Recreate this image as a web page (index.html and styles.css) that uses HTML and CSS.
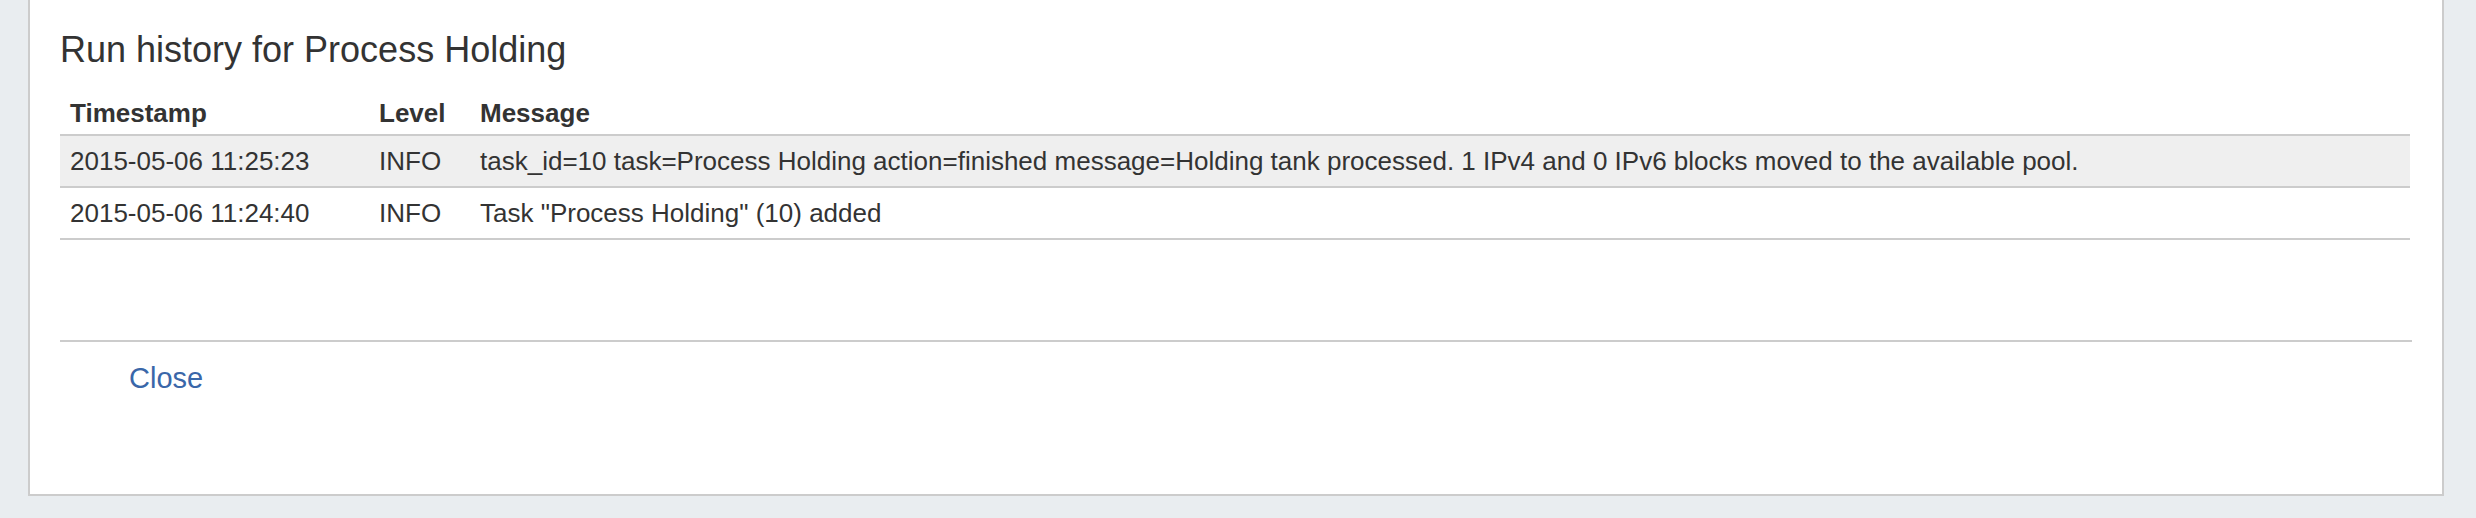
FILE: index.html
```html
<!DOCTYPE html>
<html>
<head>
<meta charset="utf-8">
<title>Run history for Process Holding</title>
<link rel="stylesheet" href="styles.css">
</head>
<body>
<div class="modal">
  <div class="modal-body">
    <h4 class="modal-title">Run history for Process Holding</h4>
    <table class="history">
      <thead>
        <tr>
          <th class="col-time">Timestamp</th>
          <th class="col-level">Level</th>
          <th class="col-msg">Message</th>
        </tr>
      </thead>
      <tbody>
        <tr class="striped">
          <td>2015-05-06 11:25:23</td>
          <td>INFO</td>
          <td>task_id=10 task=Process Holding action=finished message=Holding tank processed. 1 IPv4 and 0 IPv6 blocks moved to the available pool.</td>
        </tr>
        <tr>
          <td>2015-05-06 11:24:40</td>
          <td>INFO</td>
          <td>Task "Process Holding" (10) added</td>
        </tr>
      </tbody>
    </table>
  </div>
  <div class="modal-footer">
    <a class="btn-link" href="#">Close</a>
  </div>
</div>
</body>
</html>
```
FILE: styles.css
```css
html, body {
  margin: 0;
  padding: 0;
}
body {
  background: #e9edf0;
  font-family: "Liberation Sans", Arial, Helvetica, sans-serif;
  color: #333333;
  height: 518px;
  overflow: hidden;
}
.modal {
  margin-left: 28px;
  width: 2412px;
  height: 494px;
  background: #ffffff;
  border: 2px solid #cccccc;
  border-top: 0;
  display: flex;
  flex-direction: column;
}
.modal-body {
  padding: 30px 32px 0 30px;
  height: 340px;
  box-sizing: border-box;
  flex: none;
}
.modal-title {
  margin: 0 0 25px 0;
  font-size: 36px;
  line-height: 40px;
  font-weight: normal;
  color: #333333;
}
.history {
  width: 100%;
  border-collapse: collapse;
  font-size: 26px;
}
.history th {
  text-align: left;
  font-weight: bold;
  line-height: 36px;
  padding: 0 10px 3px 10px;
  border-bottom: 2px solid #cccccc;
}
.history td {
  line-height: 50px;
  padding: 0 10px;
  border-bottom: 2px solid #cccccc;
  white-space: nowrap;
}
.history .striped td {
  background: #efefef;
}
.col-time { width: 289px; }
.col-level { width: 81px; }
.modal-footer {
  margin: 0 30px 0 30px;
  border-top: 2px solid #cccccc;
  padding: 16px 0 0 69px;
}
.btn-link {
  font-size: 29px;
  line-height: 40px;
  color: #3a67a9;
  text-decoration: none;
}
```
